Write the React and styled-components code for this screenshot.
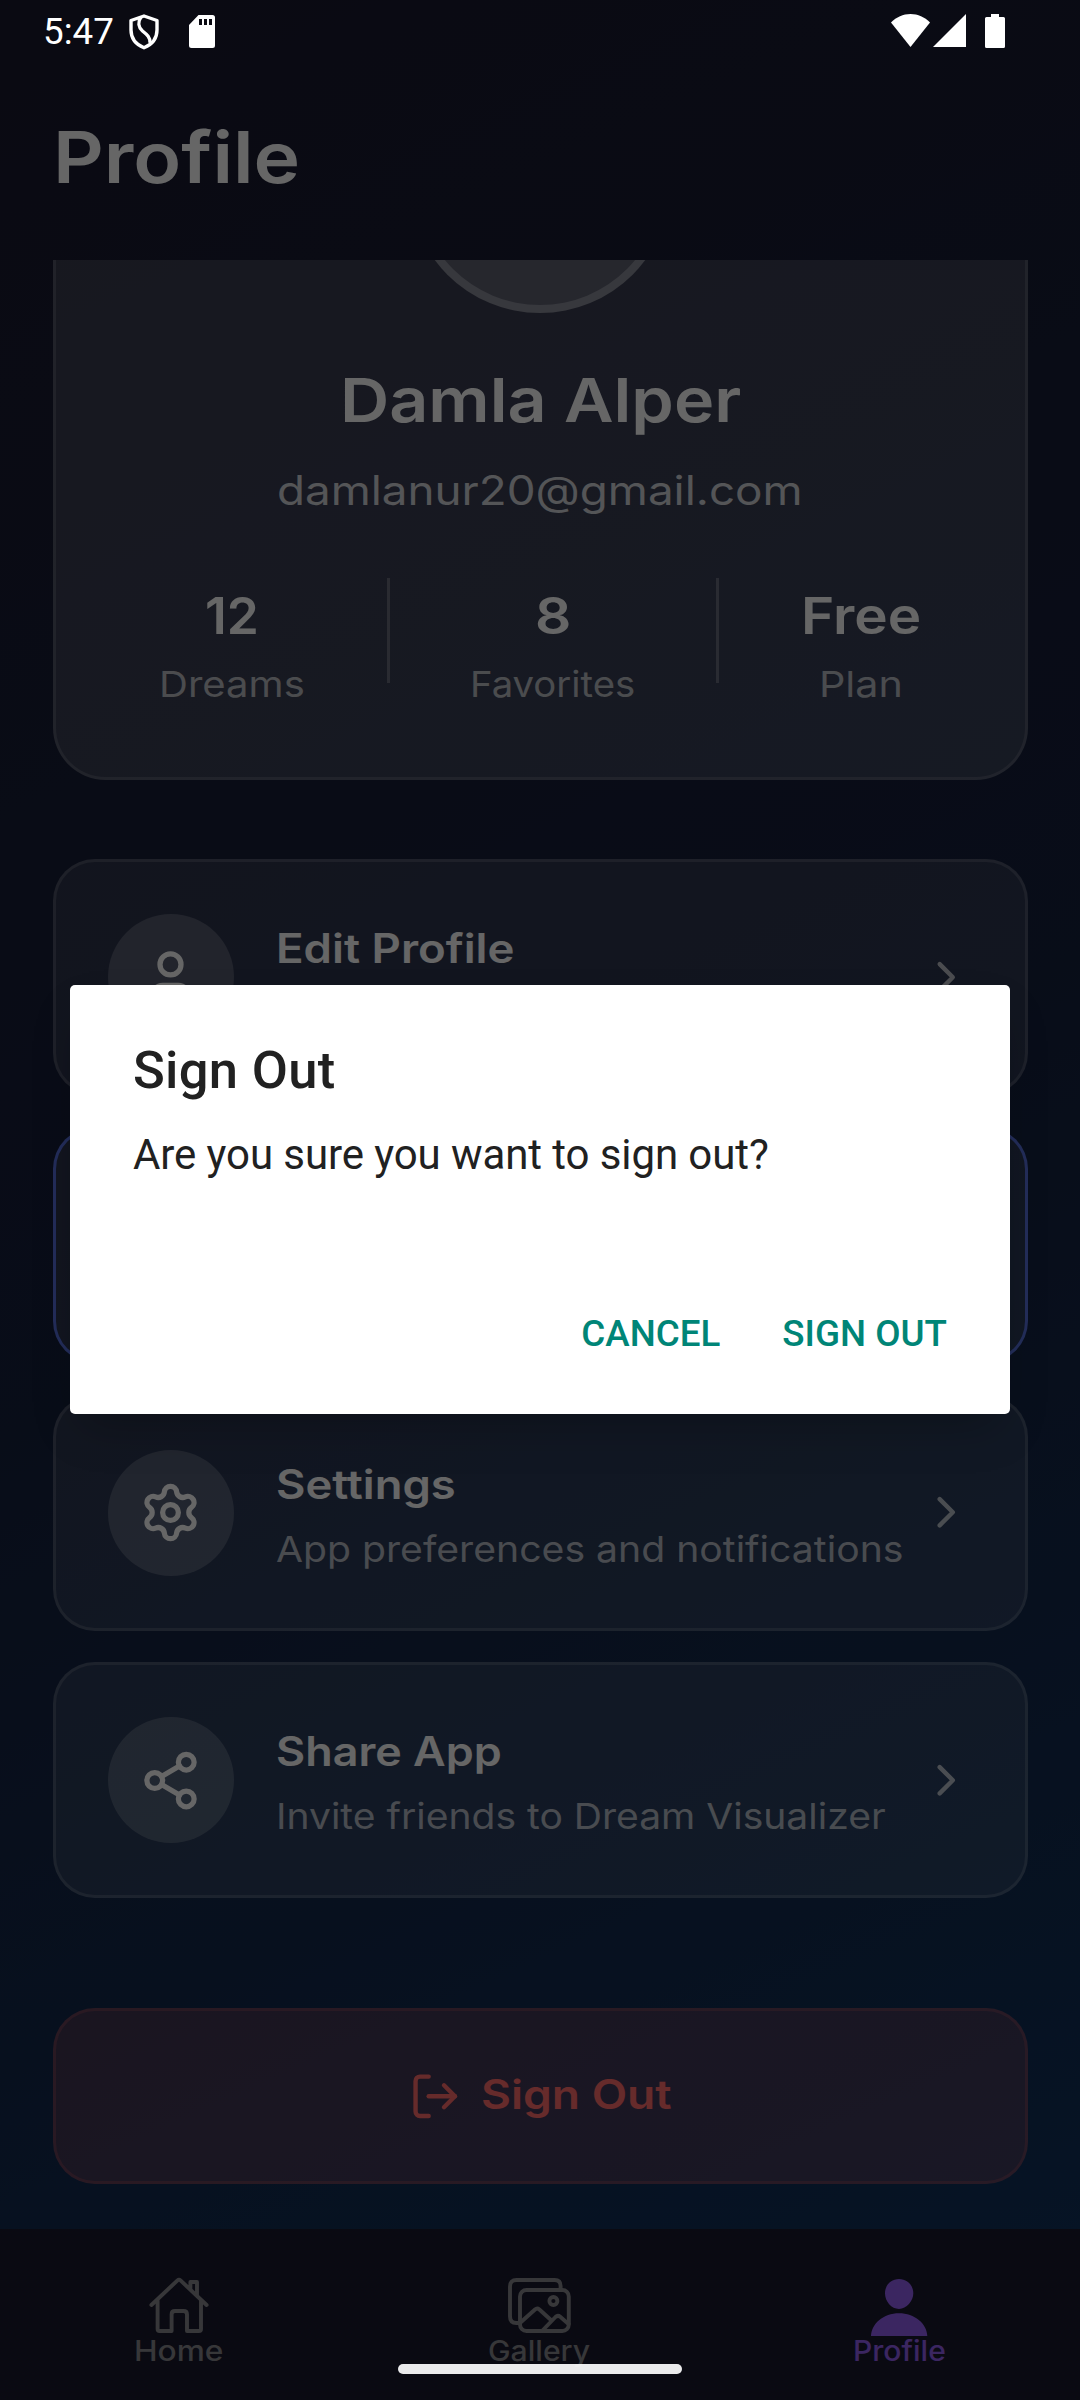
import React, { useLayoutEffect, useRef, useState } from "react";
import styled, { createGlobalStyle } from "styled-components";
import { ChevronRight, LogOut, Settings, Share2, User } from "lucide-react";

const GlobalStyle = createGlobalStyle`
  *, *::before, *::after { box-sizing: border-box; }
  body { margin: 0; background: #0a0a12; }
`;

const Screen = styled.div`
  position: relative;
  width: 1080px;
  height: 2400px;
  overflow: hidden;
  display: flex;
  flex-direction: column;
  font-family: Inter, "Liberation Sans", sans-serif;
  color: #fff;
  background: linear-gradient(155.8deg, #1a1a2e 0%, #16213e 50%, #0f3460 100%);
`;

const Header = styled.header`
  flex: none;
  height: 260px;
  padding: 114px 53px 0;
`;

const Scroll = styled.main`
  flex: none;
  height: 1969px;
  overflow: hidden;
  display: flex;
  flex-direction: column;
  justify-content: flex-end;
  padding: 0 52.5px 45px;
`;

/* Text set to a given advance width */
const FitBox = styled.div`
  flex: none;
  width: ${(p) => p.$w}px;
  height: ${(p) => p.$lh}px;
  line-height: ${(p) => p.$lh}px;
  font-size: ${(p) => p.$size}px;
  font-weight: ${(p) => p.$weight || 400};
  color: ${(p) => p.$color || "#fff"};
  white-space: nowrap;
`;
const FitSpan = styled.span`
  display: inline-block;
  transform-origin: 0 50%;
`;

function Fit({ w, lh, size, weight, color, children }) {
  const ref = useRef(null);
  const [k, setK] = useState(1);
  useLayoutEffect(() => {
    if (ref.current) setK(w / ref.current.offsetWidth);
  }, [w]);
  return (
    <FitBox $w={w} $lh={lh} $size={size} $weight={weight} $color={color}>
      <FitSpan ref={ref} style={{ transform: `scaleX(${k})` }}>{children}</FitSpan>
    </FitBox>
  );
}

const ProfileCard = styled.section`
  flex: none;
  display: flex;
  flex-direction: column;
  align-items: center;
  padding: 63px 62.5px 70px;
  margin-bottom: 79.5px;
  border: 3px solid rgba(255, 255, 255, 0.13);
  border-radius: 52.5px;
  background: rgba(255, 255, 255, 0.15);
`;

const Avatar = styled.div`
  flex: none;
  width: 262.5px;
  height: 262.5px;
  border: 8px solid rgba(255, 255, 255, 0.27);
  border-radius: 50%;
  background: rgba(255, 255, 255, 0.19);
  margin-bottom: 49.5px;
`;

const EmailRow = styled.div`
  margin: 27px 0 62px;
`;

const Stats = styled.div`
  align-self: stretch;
  display: flex;
  justify-content: space-around;
  align-items: flex-start;
  height: 128.6px;
`;

const Stat = styled.div`
  width: ${(p) => p.$w}px;
  padding-top: 6px;
  display: flex;
  flex-direction: column;
  align-items: center;
  gap: 14.4px;
`;

const StatDivider = styled.div`
  width: 3px;
  height: 105px;
  background: rgba(255, 255, 255, 0.24);
`;

const Menu = styled.nav`
  flex: none;
  display: flex;
  flex-direction: column;
  gap: 31.5px;
  margin-bottom: 110px;
`;

const MenuItem = styled.div`
  height: 236.2px;
  display: flex;
  align-items: center;
  padding: 0 52.1px;
  border: 3px solid ${(p) => (p.$accent ? "rgba(98, 126, 250, 0.85)" : "rgba(255, 255, 255, 0.14)")};
  border-radius: 42px;
  background: rgba(255, 255, 255, 0.1);
`;

const IconCircle = styled.div`
  flex: none;
  width: 126px;
  height: 126px;
  margin-right: 42px;
  border-radius: 50%;
  display: flex;
  align-items: center;
  justify-content: center;
  background: rgba(255, 255, 255, 0.19);
`;

const MenuText = styled.div`
  flex: 1;
  min-width: 0;
  padding-top: 5px;
  display: flex;
  flex-direction: column;
  gap: 16.8px;
`;

const Chevron = styled(ChevronRight)`
  flex: none;
  color: rgba(255, 255, 255, 0.68);
`;

const SignOutButton = styled.div`
  flex: none;
  height: 175.6px;
  display: flex;
  align-items: center;
  justify-content: center;
  gap: 20px;
  color: #ff6b6b;
  border: 3px solid rgba(255, 107, 107, 0.2);
  border-radius: 42px;
  background: rgba(255, 107, 107, 0.2);
`;

const ButtonLabel = styled.div`
  padding-bottom: 4px;
`;

const TabBar = styled.footer`
  flex: none;
  height: 171px;
  display: grid;
  grid-template-columns: repeat(3, 1fr);
  background: #1a1a2e;
`;

const Tab = styled.div`
  display: flex;
  flex-direction: column;
  align-items: center;
  padding: 47px 1.5px 0 0;
  color: ${(p) => p.$color};
`;

const TabIcon = styled.svg`
  display: block;
  width: 63px;
  height: 58px;
  overflow: visible;
  fill: none;
  stroke: currentColor;
  stroke-width: 3.9;
  stroke-linecap: round;
  stroke-linejoin: round;
`;

const Scrim = styled.div`
  position: absolute;
  inset: 0;
  display: flex;
  align-items: flex-start;
  justify-content: center;
  padding-top: 985px;
  background: rgba(0, 0, 0, 0.6);
`;

const Dialog = styled.div`
  width: 940px;
  height: 429px;
  padding: 53.8px 63px 0 63px;
  border-radius: 5px;
  background: #fff;
  color: #212121;
  font-family: Roboto, sans-serif;
  box-shadow: 0 22px 44px -12px rgba(0, 0, 0, 0.25);
`;

const DialogTitle = styled.h2`
  margin: 0 0 29.4px;
  font-size: 52.5px;
  line-height: 62px;
  font-weight: 500;
  letter-spacing: 0.3px;
`;

const DialogMessage = styled.p`
  margin: 0 0 132.8px;
  font-size: 42px;
  line-height: 49px;
  letter-spacing: -0.09px;
`;

const DialogActions = styled.div`
  display: flex;
  justify-content: flex-end;
  gap: 62px;
  font-size: 36.75px;
  line-height: 43px;
  font-weight: 500;
  color: #008577;
`;

const StatusBar = styled.div`
  position: absolute;
  top: 0;
  left: 0;
  right: 0;
  height: 62px;
  display: flex;
  justify-content: space-between;
  align-items: flex-start;
  padding: 9px 75px 0 43px;
  font-family: Roboto, sans-serif;
  font-size: 36.75px;
  line-height: 46px;
`;

const StatusGroup = styled.div`
  display: flex;
  align-items: flex-start;
`;

const Clock = styled.span`
  width: 86px;
`;

const StatusIcon = styled.svg`
  display: block;
  width: ${(p) => p.$w}px;
  height: 36px;
  margin: 5px 0 0 ${(p) => p.$ml || 0}px;
  overflow: visible;
`;

const HomeIndicator = styled.div`
  position: absolute;
  left: 398px;
  bottom: 26px;
  width: 284px;
  height: 10px;
  border-radius: 5px;
  background: rgba(255, 255, 255, 0.92);
`;

const stats = [
  { value: "12", vw: 54, label: "Dreams", lw: 146, w: 148 },
  { value: "8", vw: 36, label: "Favorites", lw: 165.5, w: 165 },
  { value: "Free", vw: 120, label: "Plan", lw: 84, w: 122 },
];

const menu = [
  { icon: User, title: "Edit Profile", tw: 238 },
  { accent: true },
  { icon: Settings, title: "Settings", tw: 179.5, text: "App preferences and notifications", dw: 627.5 },
  { icon: Share2, title: "Share App", tw: 225.5, text: "Invite friends to Dream Visualizer", dw: 610 },
];

const DIM = "#89898f";
const SOFT = "rgba(255,255,255,0.66)";
const PURPLE = "#945ff3";

export default function App() {
  return (
    <Screen>
      <GlobalStyle />
      <Header>
        <Fit w={247} lh={86} size={70.8} weight={600}>Profile</Fit>
      </Header>

      <Scroll>
        <ProfileCard>
          <Avatar />
          <Fit w={401} lh={76} size={60.7} weight={600}>Damla Alper</Fit>
          <EmailRow>
            <Fit w={525.5} lh={51} size={40.4} color="rgba(255,255,255,0.78)">damlanur20@gmail.com</Fit>
          </EmailRow>
          <Stats>
            {stats.map((s, i) => (
              <React.Fragment key={s.label}>
                {i > 0 && <StatDivider />}
                <Stat $w={s.w}>
                  <Fit w={s.vw} lh={64} size={50.5} weight={600}>{s.value}</Fit>
                  <Fit w={s.lw} lh={45} size={35.4} color={SOFT}>{s.label}</Fit>
                </Stat>
              </React.Fragment>
            ))}
          </Stats>
        </ProfileCard>

        <Menu>
          {menu.map((m, i) => (
            <MenuItem key={i} $accent={m.accent}>
              {m.icon && (
                <>
                  <IconCircle><m.icon size={63} strokeWidth={2} /></IconCircle>
                  <MenuText>
                    <Fit w={m.tw} lh={51} size={40.4} weight={600}>{m.title}</Fit>
                    {m.text ? (
                      <Fit w={m.dw} lh={45} size={35.4} color={SOFT}>{m.text}</Fit>
                    ) : (
                      <FitBox $w={600} $lh={45} $size={35.4} />
                    )}
                  </MenuText>
                  <Chevron size={52.5} strokeWidth={2} />
                </>
              )}
            </MenuItem>
          ))}
        </Menu>

        <SignOutButton>
          <LogOut size={52.5} strokeWidth={2} />
          <ButtonLabel>
            <Fit w={190.5} lh={51} size={40.4} weight={600} color="#ff6b6b">Sign Out</Fit>
          </ButtonLabel>
        </SignOutButton>
      </Scroll>

      <TabBar>
        <Tab $color={DIM}>
          <TabIcon viewBox="0 0 63 58">
            <path d="M3.4 29 29.5 4.4Q31 3 32.5 4.4L58.6 29M42.4 13.2V6H49V19.6M9.6 24.5V53Q9.6 55 11.6 55H23.6V38.5Q23.6 35 27 35H35.5Q39 35 39 38.5V55H51Q53 55 53 53V24.5" />
          </TabIcon>
          <Fit w={90} lh={34} size={27.8} weight={500} color={DIM}>Home</Fit>
        </Tab>
        <Tab $color={DIM}>
          <TabIcon viewBox="0 0 63 58">
            <path d="M52.6 13V10Q52.6 4 46.6 4H8.5Q2 4 2 10.5V40.5Q2 47 8.5 47H11.5" />
            <rect x="12" y="14" width="48.8" height="41" rx="6.5" />
            <circle cx="45.4" cy="25" r="4" />
            <path d="M12.5 46.5 27 33.5Q29.2 31.6 31.4 33.5L43.5 44.5M34.5 54.5 47.5 41Q49.8 38.8 52.2 40.8L60.5 48" />
          </TabIcon>
          <Fit w={102} lh={34} size={27.8} weight={500} color={DIM}>Gallery</Fit>
        </Tab>
        <Tab $color={PURPLE}>
          <TabIcon viewBox="0 0 63 58">
            <path fill="currentColor" stroke="none" d="M31 3C39 3 45.3 9 45.3 17.3C45.3 25 38.5 33 31 33C23.5 33 17 25.500 17 17.300C17 9 23 3 31 3ZM3 60C3.500 47.500 15.500 37.300 31 37.300C46.500 37.300 59 47.500 59.300 60Z" />
          </TabIcon>
          <Fit w={93} lh={34} size={27.8} weight={500} color={PURPLE}>Profile</Fit>
        </Tab>
      </TabBar>

      <Scrim>
        <Dialog role="dialog">
          <DialogTitle>Sign Out</DialogTitle>
          <DialogMessage>Are you sure you want to sign out?</DialogMessage>
          <DialogActions>
            <span>CANCEL</span>
            <span>SIGN OUT</span>
          </DialogActions>
        </Dialog>
      </Scrim>

      <StatusBar>
        <StatusGroup>
          <Clock>5:47</Clock>
          <StatusIcon $w={30} viewBox="0 0 30 36">
            <path d="M15 2 28 6.500V16C28 24 23 30.500 15 33.800C7 30.500 2 24 2 16V6.500Z" fill="none" stroke="#fff" strokeWidth="3.400" strokeLinejoin="round" />
            <path d="M12 3C8.500 8 9.500 13.500 13.500 17C18 20.500 21.500 23.500 21 29" fill="none" stroke="#fff" strokeWidth="3.400" />
          </StatusIcon>
          <StatusIcon $w={26} $ml={30} viewBox="0 0 26 36">
            <path fill="#fff" fillRule="evenodd" d="M9.500 1H23.500Q26 1 26 3.500V31.500Q26 34 23.500 34H2.500Q0 34 0 31.500V11ZM10 5V11H13V5ZM15 5V11H18V5ZM20 5V11H23V5Z" />
          </StatusIcon>
        </StatusGroup>
        <StatusGroup>
          <StatusIcon $w={39} viewBox="0 0 39 36">
            <path fill="#fff" d="M0 8.500C5.500 3 12 0 19.500 0C27 0 33.500 3 39 8.500L19.500 33Z" />
          </StatusIcon>
          <StatusIcon $w={33} $ml={3} viewBox="0 0 33 36">
            <path fill="#fff" d="M33 0V33H0Z" />
          </StatusIcon>
          <StatusIcon $w={20} $ml={19} viewBox="0 0 20 36">
            <path fill="#fff" d="M6 0H14V3H18.500Q20 3 20 4.500V32.500Q20 34 18.500 34H1.500Q0 34 0 32.500V4.500Q0 3 1.500 3H6Z" />
          </StatusIcon>
        </StatusGroup>
      </StatusBar>
      <HomeIndicator />
    </Screen>
  );
}
